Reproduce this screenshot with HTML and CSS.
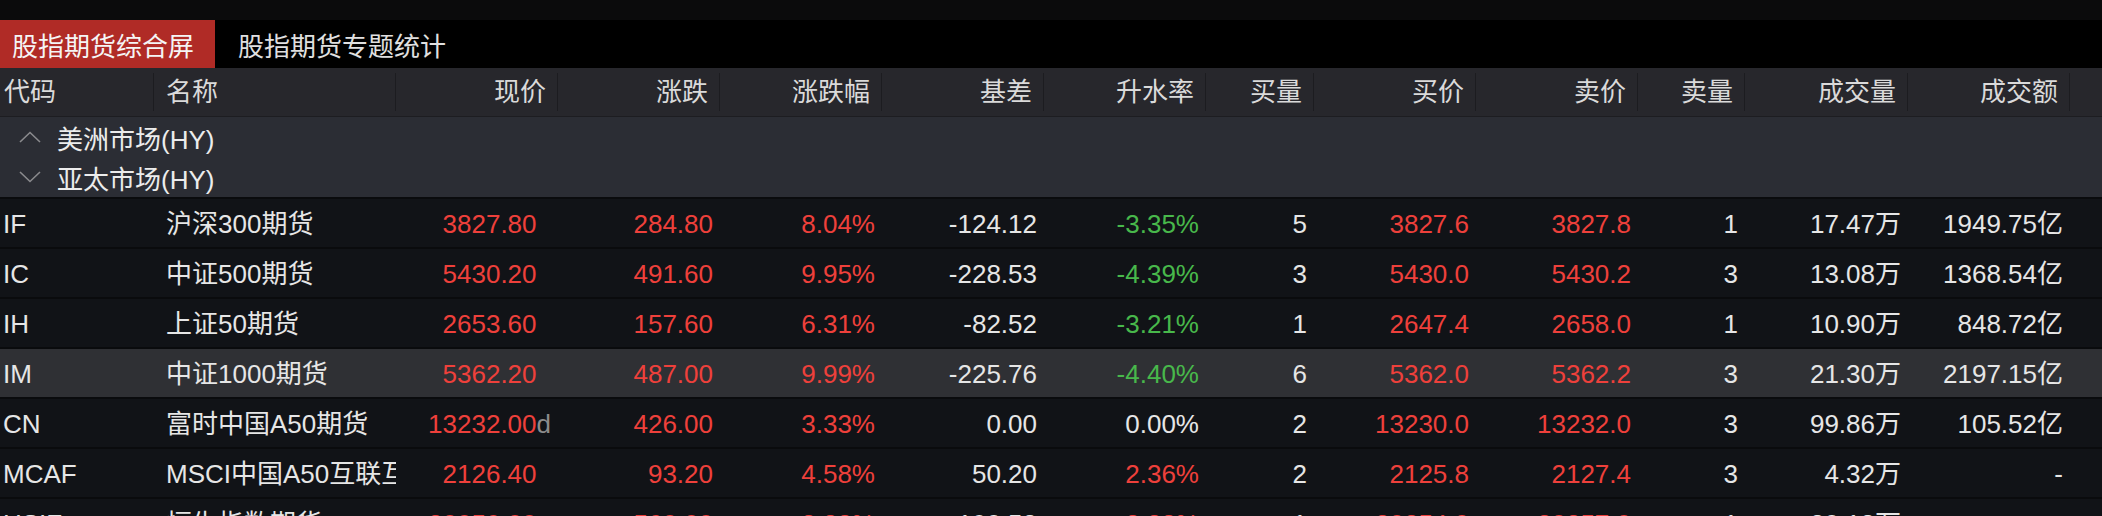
FILE: index.html
```html
<!DOCTYPE html>
<html lang="zh-CN">
<head>
<meta charset="utf-8">
<title>股指期货综合屏</title>
<link rel="stylesheet" href="styles.css">
</head>
<body>
<div class="topstrip"></div>
<div class="tabs">
  <div class="tab active">股指期货综合屏</div>
  <div class="tab">股指期货专题统计</div>
</div>
<div class="cols head">
  <div class="h l first">代码</div>
  <div class="h l name">名称</div>
  <div class="h">现价</div>
  <div class="h">涨跌</div>
  <div class="h">涨跌幅</div>
  <div class="h">基差</div>
  <div class="h">升水率</div>
  <div class="h">买量</div>
  <div class="h">买价</div>
  <div class="h">卖价</div>
  <div class="h">卖量</div>
  <div class="h">成交量</div>
  <div class="h">成交额</div>
  <div class="h fill"></div>
</div>
<div class="group">
  <svg class="chev" width="22" height="12" viewBox="0 0 22 12"><polyline points="1,11 11,1.5 21,11" fill="none" stroke="#8a8a8d" stroke-width="1.6"/></svg>
  <span>美洲市场(HY)</span>
</div>
<div class="group">
  <svg class="chev" width="22" height="12" viewBox="0 0 22 12"><polyline points="1,1 11,10.5 21,1" fill="none" stroke="#8a8a8d" stroke-width="1.6"/></svg>
  <span>亚太市场(HY)</span>
</div>
<div class="rows">
  <div class="cols row">
    <div class="c code">IF</div><div class="c name">沪深300期货</div>
    <div class="c r up">3827.80<span class="sfx">d</span></div><div class="c r up">284.80</div><div class="c r up">8.04%</div>
    <div class="c r">-124.12</div><div class="c r down">-3.35%</div><div class="c r">5</div>
    <div class="c r up">3827.6</div><div class="c r up">3827.8</div><div class="c r">1</div>
    <div class="c r">17.47万</div><div class="c r">1949.75亿</div><div class="c"></div>
  </div>
  <div class="cols row">
    <div class="c code">IC</div><div class="c name">中证500期货</div>
    <div class="c r up">5430.20<span class="sfx">d</span></div><div class="c r up">491.60</div><div class="c r up">9.95%</div>
    <div class="c r">-228.53</div><div class="c r down">-4.39%</div><div class="c r">3</div>
    <div class="c r up">5430.0</div><div class="c r up">5430.2</div><div class="c r">3</div>
    <div class="c r">13.08万</div><div class="c r">1368.54亿</div><div class="c"></div>
  </div>
  <div class="cols row">
    <div class="c code">IH</div><div class="c name">上证50期货</div>
    <div class="c r up">2653.60<span class="sfx">d</span></div><div class="c r up">157.60</div><div class="c r up">6.31%</div>
    <div class="c r">-82.52</div><div class="c r down">-3.21%</div><div class="c r">1</div>
    <div class="c r up">2647.4</div><div class="c r up">2658.0</div><div class="c r">1</div>
    <div class="c r">10.90万</div><div class="c r">848.72亿</div><div class="c"></div>
  </div>
  <div class="cols row sel">
    <div class="c code">IM</div><div class="c name">中证1000期货</div>
    <div class="c r up">5362.20<span class="sfx">d</span></div><div class="c r up">487.00</div><div class="c r up">9.99%</div>
    <div class="c r">-225.76</div><div class="c r down">-4.40%</div><div class="c r">6</div>
    <div class="c r up">5362.0</div><div class="c r up">5362.2</div><div class="c r">3</div>
    <div class="c r">21.30万</div><div class="c r">2197.15亿</div><div class="c"></div>
  </div>
  <div class="cols row">
    <div class="c code">CN</div><div class="c name">富时中国A50期货</div>
    <div class="c r up">13232.00<span class="sfx show">d</span></div><div class="c r up">426.00</div><div class="c r up">3.33%</div>
    <div class="c r">0.00</div><div class="c r">0.00%</div><div class="c r">2</div>
    <div class="c r up">13230.0</div><div class="c r up">13232.0</div><div class="c r">3</div>
    <div class="c r">99.86万</div><div class="c r">105.52亿</div><div class="c"></div>
  </div>
  <div class="cols row">
    <div class="c code">MCAF</div><div class="c name">MSCI中国A50互联互通期货</div>
    <div class="c r up">2126.40<span class="sfx">d</span></div><div class="c r up">93.20</div><div class="c r up">4.58%</div>
    <div class="c r">50.20</div><div class="c r up">2.36%</div><div class="c r">2</div>
    <div class="c r up">2125.8</div><div class="c r up">2127.4</div><div class="c r">3</div>
    <div class="c r">4.32万</div><div class="c r">-</div><div class="c"></div>
  </div>
  <div class="cols row">
    <div class="c code">HSIF</div><div class="c name">恒生指数期货</div>
    <div class="c r up">20059.00<span class="sfx">d</span></div><div class="c r up">560.00</div><div class="c r up">2.88%</div>
    <div class="c r">-190.52</div><div class="c r up">2.38%</div><div class="c r">1</div>
    <div class="c r up">20254.0</div><div class="c r up">20257.0</div><div class="c r">1</div>
    <div class="c r">20.18万</div><div class="c r">-</div><div class="c"></div>
  </div>
</div>
</body>
</html>
```

FILE: styles.css
```css
* { box-sizing: border-box; }
html, body { margin: 0; padding: 0; background: #111317; }
body {
  width: 2102px;
  height: 516px;
  overflow: hidden;
  font-family: "Liberation Sans", "Noto Sans CJK SC", sans-serif;
  font-size: 26px;
  color: #e6e6e6;
}
.topstrip { height: 20px; background: #0b0b0c; }
.tabs { display: flex; gap: 11px; height: 48px; background: #000; }
.tab {
  display: flex;
  align-items: center;
  padding: 0 21px 0 12px;
  color: #e0e0e0;
}
.tab.active { background: #b02b26; color: #f5f5f5; }

.cols {
  display: grid;
  grid-template-columns: 154px 242px 162px 162px 162px 162px 162px 108px 162px 162px 107px 163px 162px 1fr;
}
.head {
  height: 49px;
  background: #27272c;
  border-bottom: 1px solid #1d1d21;
  color: #dadada;
}
.h {
  line-height: 48px;
  text-align: right;
  padding-right: 12px;
  white-space: nowrap;
  background: linear-gradient(#1c1c20, #1c1c20) right center / 1px 38px no-repeat;
}
.h.l { text-align: left; padding: 0 0 0 12px; }
.h.first { padding-left: 4px; }
.h.fill { background: none; }

.group {
  display: flex;
  align-items: center;
  height: 40px;
  padding-left: 19px;
  background: #2b2d34;
  color: #ececec;
}
.chev { margin-right: 16px; }

.row {
  height: 50px;
  border-top: 2px solid #0a0b0d;
  background: #111317;
}
.row.sel { background: #2f3034; }
.c {
  line-height: 46px;
  padding-top: 2px;
  white-space: nowrap;
  overflow: hidden;
}
.c.code { padding-left: 3px; }
.c.name { padding-left: 12px; padding-right: 6px; text-overflow: clip; }
.c.r { text-align: right; padding-right: 7px; }
.up { color: #ee403b; }
.down { color: #48b84b; }
.sfx { color: #8c8c8c; visibility: hidden; }
.sfx.show { visibility: visible; }
```
